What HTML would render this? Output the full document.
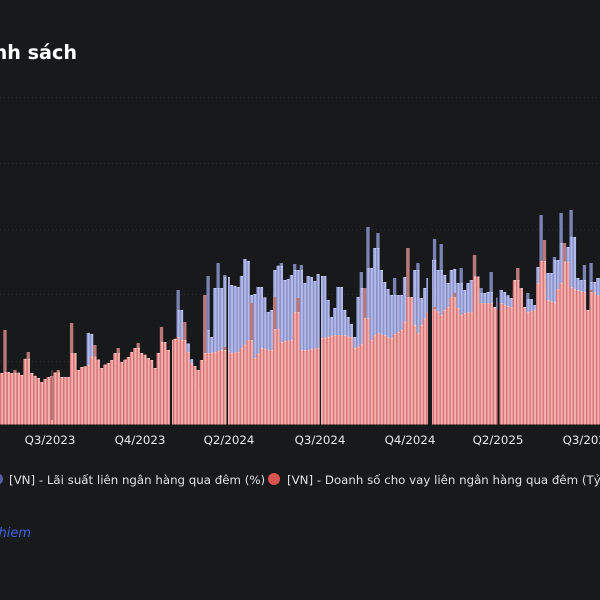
<!DOCTYPE html>
<html><head><meta charset="utf-8">
<style>
html,body{margin:0;padding:0;width:600px;height:600px;background:#18191b;overflow:hidden}
text{font-family:"DejaVu Sans","Liberation Sans",sans-serif}
</style></head>
<body>
<svg id="c" xmlns="http://www.w3.org/2000/svg" width="600" height="600" viewBox="0 0 600 600" style="display:block">
<rect width="600" height="600" fill="#18191b"/>
<g stroke="#2a2b2d" stroke-width="1" stroke-dasharray="1 3">
<line x1="0" x2="600" y1="97.5" y2="97.5"/><line x1="0" x2="600" y1="163.5" y2="163.5"/><line x1="0" x2="600" y1="229.5" y2="229.5"/><line x1="0" x2="600" y1="294.5" y2="294.5"/><line x1="0" x2="600" y1="361.5" y2="361.5"/>
</g>
<g id="bars"></g>
<text x="77" y="59" text-anchor="end" font-size="19.2" font-weight="700" fill="#fff">Danh sách</text>
<g font-size="11.8" fill="#e8e8e8" text-anchor="middle">
<text x="50" y="444">Q3/2023</text><text x="140" y="444">Q4/2023</text><text x="229" y="444">Q2/2024</text><text x="320" y="444">Q3/2024</text><text x="410" y="444">Q4/2024</text><text x="498" y="444">Q2/2025</text><text x="588" y="444">Q3/2025</text>
</g>
<circle cx="-3" cy="479" r="6" fill="#5a5aa8"/>
<text x="9" y="484" font-size="11.8" fill="#e0e0e0">[VN] - Lãi suất liên ngân hàng qua đêm (%)</text>
<circle cx="274" cy="479" r="6" fill="#d9534f"/>
<text x="287" y="484" font-size="11.8" fill="#e0e0e0">[VN] - Doanh số cho vay liên ngân hàng qua đêm (Tỷ đồng)</text>
<text x="31" y="537" text-anchor="end" font-size="13" font-style="italic" fill="#3f63dc">Nguyen Nhiem</text>
</svg>
<script>
var red=[[0,373],[4,330],[7,372],[12,373],[16,370],[20,375],[27,352],[32,373],[37,378],[42,382],[47,377],[52,376],[57,370],[62,377],[67,377],[71,323],[77,370],[83,367],[89,365],[95,345],[100,368],[107,363],[112,360],[117,348],[122,362],[128,357],[133,352],[137,343],[143,353],[150,360],[154,368],[158,353],[162,327],[165,342],[168,350],[173,340],[178,337],[182,340],[184,322],[188,352],[193,363],[197,370],[200,362],[203,360],[206,295],[209,353],[215,352],[220,350],[225,347],[230,353],[237,352],[243,348],[247,340],[252,303],[255,358],[262,348],[270,350],[273,297],[280,342],[290,340],[297,298],[300,350],[307,350],[317,348],[322,338],[328,337],[333,335],[343,335],[350,337],[356,348],[363,343],[365,288],[370,340],[377,333],[383,335],[390,338],[397,332],[400,330],[407,317],[409,248],[412,297],[413,325],[417,333],[422,325],[427,312],[435,307],[440,315],[447,307],[453,293],[460,315],[467,312],[473,313],[476,255],[480,303],[490,303],[497,310],[500,303],[510,307],[515,280],[519,268],[523,307],[528,312],[533,310],[539,283],[543,240],[548,300],[553,302],[560,283],[566,243],[570,287],[577,290],[585,292],[587,310],[592,290],[597,295]];
var blue=[[178,290],[181,310],[200,400],[204,380],[206,330],[208,276],[212,337],[215,288],[218,263],[222,297],[223,288],[226,275],[230,279],[233,285],[237,287],[240,287],[242,298],[243,276],[246,259],[249,261],[252,295],[255,294],[258,287],[261,278],[263,287],[267,312],[270,310],[273,282],[275,270],[280,263],[283,280],[287,279],[290,275],[293,264],[297,270],[300,265],[303,283],[307,276],[310,277],[313,281],[317,274],[322,276],[325,276],[328,300],[332,317],[335,308],[338,287],[341,287],[343,310],[347,317],[350,324],[356,337],[358,297],[362,272],[365,288],[367,227],[370,268],[373,248],[377,233],[380,270],[383,247],[385,282],[388,289],[392,295],[395,278],[398,295],[400,295],[403,280],[405,277],[409,248],[412,297],[415,270],[419,263],[422,298],[424,269],[426,288],[435,239],[437,270],[440,244],[443,275],[447,283],[450,270],[455,269],[458,283],[462,268],[465,290],[468,283],[472,280],[476,255],[478,295],[482,288],[485,293],[488,292],[492,272],[495,307],[500,290],[505,292],[510,298],[515,290],[519,268],[523,307],[529,293],[533,305],[539,267],[542,215],[545,288],[548,273],[552,273],[555,257],[558,260],[561,213],[563,233],[566,243],[568,247],[571,210],[574,237],[577,278],[580,280],[583,265],[587,310],[591,263],[594,282],[597,278]];
var p=3.33,n=181,off=1.6;
function build(a){var o=[];for(var i=0;i<n;i++){var c=i*p+off,v=null;for(var j=0;j<a.length-1;j++){if(a[j][0]<=c&&c<=a[j+1][0]){var t=(c-a[j][0])/(a[j+1][0]-a[j][0]);v=a[j][1]+t*(a[j+1][1]-a[j][1]);break}}if(v==null&&c<a[0][0])v=null;if(v==null&&c>a[a.length-1][0])v=a[a.length-1][1];o.push(v)}
a.forEach(function(q){var k=Math.round((q[0]-off)/p);if(k>=0&&k<n)o[k]=q[1]});return o}
var R=build(red),B=build(blue);
B[Math.round((89-off)/p)]=333;B[Math.round((92-off)/p)]=334;
function r(x,y,w,h,f){return '<rect x="'+x.toFixed(2)+'" y="'+y.toFixed(1)+'" width="'+w+'" height="'+h.toFixed(1)+'" fill="'+f+'"/>'}
var s='',base=424.5;
function col(A,i,dark,light,stripe,cap){var t=A[i],x=i*p;if(t==null)return;var l=A[i-1]==null?999:A[i-1],m=A[i+1]==null?999:A[i+1],q=Math.min(l,m);if(t<q-2){s+=r(x,t,p,q-t,dark);t=q}
s+=r(x,t,p,base-t,stripe);s+=r(x+1.3,t,p-1.4,base-t,light);s+=r(x+1.3,t,p-1.4,1,cap)}
for(var i=0;i<n;i++)col(B,i,'#7a83b4','#b3baea','#8b94cc','#c8cdf2');
for(var i=0;i<n;i++)col(R,i,'#bb7878','#f4b2ae','#dc7477','#f9d3cf');
[[170,2],[226.5,1.5],[319.8,1.2],[428,4],[497.5,2]].forEach(function(g){s+=r(g[0],200,g[1],225,'#18191b')});
s+=r(51.5,370,1,50,'#6b5050');
document.getElementById('bars').innerHTML=s;
</script>
</body></html>
